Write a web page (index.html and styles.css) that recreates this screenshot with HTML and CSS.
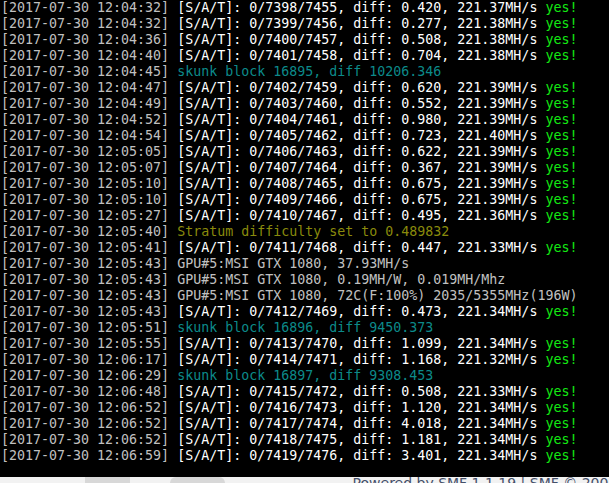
FILE: index.html
```html
<!DOCTYPE html>
<html lang="en">
<head>
    <meta charset="UTF-8">
    <title>ccminer log</title>
    <link rel="stylesheet" href="styles.css">
</head>
<body>
    <main class="console">
        <div class="line"><span class="ts">[2017-07-30 12:04:32]</span> <span class="w">[S/A/T]: 0/7398/7455, diff: 0.420, 221.37MH/s</span> <span class="ok">yes!</span></div>
        <div class="line"><span class="ts">[2017-07-30 12:04:32]</span> <span class="w">[S/A/T]: 0/7399/7456, diff: 0.277, 221.38MH/s</span> <span class="ok">yes!</span></div>
        <div class="line"><span class="ts">[2017-07-30 12:04:36]</span> <span class="w">[S/A/T]: 0/7400/7457, diff: 0.508, 221.38MH/s</span> <span class="ok">yes!</span></div>
        <div class="line"><span class="ts">[2017-07-30 12:04:40]</span> <span class="w">[S/A/T]: 0/7401/7458, diff: 0.704, 221.38MH/s</span> <span class="ok">yes!</span></div>
        <div class="line"><span class="ts">[2017-07-30 12:04:45]</span> <span class="block">skunk block 16895, diff 10206.346</span></div>
        <div class="line"><span class="ts">[2017-07-30 12:04:47]</span> <span class="w">[S/A/T]: 0/7402/7459, diff: 0.620, 221.39MH/s</span> <span class="ok">yes!</span></div>
        <div class="line"><span class="ts">[2017-07-30 12:04:49]</span> <span class="w">[S/A/T]: 0/7403/7460, diff: 0.552, 221.39MH/s</span> <span class="ok">yes!</span></div>
        <div class="line"><span class="ts">[2017-07-30 12:04:52]</span> <span class="w">[S/A/T]: 0/7404/7461, diff: 0.980, 221.39MH/s</span> <span class="ok">yes!</span></div>
        <div class="line"><span class="ts">[2017-07-30 12:04:54]</span> <span class="w">[S/A/T]: 0/7405/7462, diff: 0.723, 221.40MH/s</span> <span class="ok">yes!</span></div>
        <div class="line"><span class="ts">[2017-07-30 12:05:05]</span> <span class="w">[S/A/T]: 0/7406/7463, diff: 0.622, 221.39MH/s</span> <span class="ok">yes!</span></div>
        <div class="line"><span class="ts">[2017-07-30 12:05:07]</span> <span class="w">[S/A/T]: 0/7407/7464, diff: 0.367, 221.39MH/s</span> <span class="ok">yes!</span></div>
        <div class="line"><span class="ts">[2017-07-30 12:05:10]</span> <span class="w">[S/A/T]: 0/7408/7465, diff: 0.675, 221.39MH/s</span> <span class="ok">yes!</span></div>
        <div class="line"><span class="ts">[2017-07-30 12:05:10]</span> <span class="w">[S/A/T]: 0/7409/7466, diff: 0.675, 221.39MH/s</span> <span class="ok">yes!</span></div>
        <div class="line"><span class="ts">[2017-07-30 12:05:27]</span> <span class="w">[S/A/T]: 0/7410/7467, diff: 0.495, 221.36MH/s</span> <span class="ok">yes!</span></div>
        <div class="line"><span class="ts">[2017-07-30 12:05:40]</span> <span class="stratum">Stratum difficulty set to 0.489832</span></div>
        <div class="line"><span class="ts">[2017-07-30 12:05:41]</span> <span class="w">[S/A/T]: 0/7411/7468, diff: 0.447, 221.33MH/s</span> <span class="ok">yes!</span></div>
        <div class="line"><span class="ts">[2017-07-30 12:05:43]</span> <span class="ts">GPU#5:MSI GTX 1080, 37.93MH/s</span></div>
        <div class="line"><span class="ts">[2017-07-30 12:05:43]</span> <span class="ts">GPU#5:MSI GTX 1080, 0.19MH/W, 0.019MH/Mhz</span></div>
        <div class="line"><span class="ts">[2017-07-30 12:05:43]</span> <span class="ts">GPU#5:MSI GTX 1080, 72C(F:100%) 2035/5355MHz(196W)</span></div>
        <div class="line"><span class="ts">[2017-07-30 12:05:43]</span> <span class="w">[S/A/T]: 0/7412/7469, diff: 0.473, 221.34MH/s</span> <span class="ok">yes!</span></div>
        <div class="line"><span class="ts">[2017-07-30 12:05:51]</span> <span class="block">skunk block 16896, diff 9450.373</span></div>
        <div class="line"><span class="ts">[2017-07-30 12:05:55]</span> <span class="w">[S/A/T]: 0/7413/7470, diff: 1.099, 221.34MH/s</span> <span class="ok">yes!</span></div>
        <div class="line"><span class="ts">[2017-07-30 12:06:17]</span> <span class="w">[S/A/T]: 0/7414/7471, diff: 1.168, 221.32MH/s</span> <span class="ok">yes!</span></div>
        <div class="line"><span class="ts">[2017-07-30 12:06:29]</span> <span class="block">skunk block 16897, diff 9308.453</span></div>
        <div class="line"><span class="ts">[2017-07-30 12:06:48]</span> <span class="w">[S/A/T]: 0/7415/7472, diff: 0.508, 221.33MH/s</span> <span class="ok">yes!</span></div>
        <div class="line"><span class="ts">[2017-07-30 12:06:52]</span> <span class="w">[S/A/T]: 0/7416/7473, diff: 1.120, 221.34MH/s</span> <span class="ok">yes!</span></div>
        <div class="line"><span class="ts">[2017-07-30 12:06:52]</span> <span class="w">[S/A/T]: 0/7417/7474, diff: 4.018, 221.34MH/s</span> <span class="ok">yes!</span></div>
        <div class="line"><span class="ts">[2017-07-30 12:06:52]</span> <span class="w">[S/A/T]: 0/7418/7475, diff: 1.181, 221.34MH/s</span> <span class="ok">yes!</span></div>
        <div class="line"><span class="ts">[2017-07-30 12:06:59]</span> <span class="w">[S/A/T]: 0/7419/7476, diff: 3.401, 221.34MH/s</span> <span class="ok">yes!</span></div>
    </main>
    <footer class="page-foot">
        <div class="foot-logos">
            <span class="logo-a"></span>
            <span class="logo-b"></span>
        </div>
        <div class="foot-text">Powered by SMF 1.1.19 | SMF &copy; 2006-2009</div>
    </footer>
</body>
</html>
```

FILE: styles.css
```css
:root {
    --bg: #000000;
    --gray: #c0c0c0;
    --white: #ffffff;
    --green: #13e813;
    --cyan: #0c8a8a;
    --olive: #8a8a0c;
}

html, body {
    margin: 0;
    padding: 0;
    background-color: #f2f2f2;
    overflow: hidden;
}

.console {
    background-color: var(--bg);
    height: 477px;
    padding: 0 0 0 1px;
    box-sizing: border-box;
    font-family: "DejaVu Sans Mono", "Liberation Mono", monospace;
    font-size: 13.3px;
    line-height: 16px;
}

.line {
    height: 16px;
    white-space: pre;
}

.ts {
    color: var(--gray);
}

.w {
    color: var(--white);
}

.ok {
    color: var(--green);
}

.block {
    color: var(--cyan);
}

.stratum {
    color: var(--olive);
}

.page-foot {
    display: flex;
    justify-content: space-between;
    height: 6px;
    overflow: hidden;
}

.foot-logos {
    display: flex;
    gap: 40px;
    padding-left: 85px;
}

.logo-a,
.logo-b {
    display: block;
    width: 45px;
    height: 6px;
    background-color: #d8d8d8;
}

.logo-b {
    width: 55px;
    border-radius: 30px 30px 0 0;
}

.foot-text {
    font-family: "DejaVu Sans", sans-serif;
    font-size: 14px;
    line-height: 14px;
    color: #45506a;
    margin-top: -1px;
    white-space: nowrap;
    margin-right: -49px;
}
```
